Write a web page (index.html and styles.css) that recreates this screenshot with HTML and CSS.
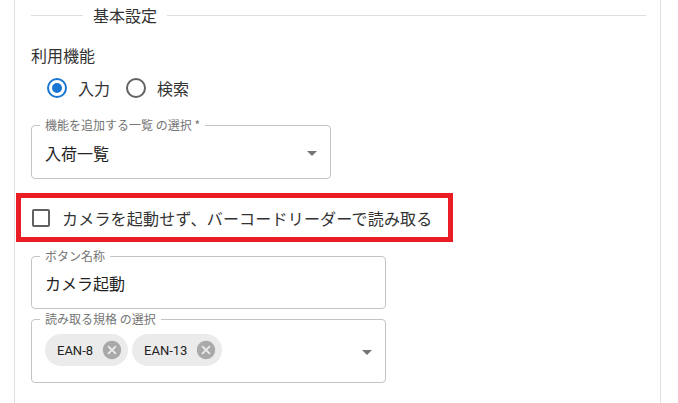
FILE: index.html
```html
<!DOCTYPE html>
<html>
<head>
  <title>基本設定</title>
  <link rel="stylesheet" href="styles.css">
</head>
<body>
  <div class="panel">
    <div class="section-title">
      <span class="rule rule-short"></span>
      <span class="section-text">基本設定</span>
      <span class="rule"></span>
    </div>

    <div class="group-label">利用機能</div>
    <div class="radio-row">
      <label class="radio-item"><span class="radio checked"></span>入力</label>
      <label class="radio-item"><span class="radio"></span>検索</label>
    </div>

    <fieldset class="field field-select">
      <legend>機能を追加する一覧 の選択 *</legend>
      <div class="field-value">入荷一覧</div>
      <span class="arrow"></span>
    </fieldset>

    <div class="highlight">
      <span class="checkbox"></span>
      <span class="check-text">カメラを起動せず、バーコードリーダーで読み取る</span>
    </div>

    <fieldset class="field field-text">
      <legend>ボタン名称</legend>
      <div class="field-value">カメラ起動</div>
    </fieldset>

    <fieldset class="field field-chips">
      <legend>読み取る規格 の選択</legend>
      <div class="chips">
        <span class="chip">EAN-8
          <svg viewBox="0 0 24 24"><path d="M12 2C6.470 2 2 6.470 2 12s4.470 10 10 10 10-4.470 10-10S17.530 2 12 2zm5 13.590L15.590 17 12 13.410 8.410 17 7 15.590 10.590 12 7 8.410 8.410 7 12 10.590 15.590 7 17 8.410 13.410 12 17 15.590z"/></svg>
        </span>
        <span class="chip">EAN-13
          <svg viewBox="0 0 24 24"><path d="M12 2C6.470 2 2 6.470 2 12s4.470 10 10 10 10-4.470 10-10S17.530 2 12 2zm5 13.590L15.590 17 12 13.410 8.410 17 7 15.590 10.590 12 7 8.410 8.410 7 12 10.590 15.590 7 17 8.410 13.410 12 17 15.590z"/></svg>
        </span>
      </div>
      <span class="arrow"></span>
    </fieldset>
  </div>
</body>
</html>
```

FILE: styles.css
```css
body {
  font-family: "Noto Sans CJK JP", "Noto Sans", sans-serif;
  background-color: #fff;
  color: #333;
  margin: 0;
  padding: 0;
}

.panel {
  margin-left: 14px;
  width: 647px;
  height: 403px;
  border-left: 1px solid #e0e0e0;
  border-right: 1px solid #e0e0e0;
  padding-left: 16px;
  box-sizing: border-box;
}

.section-title {
  display: flex;
  align-items: center;
  height: 30px;
  width: 615px;
}

.rule {
  flex: 1;
  height: 1px;
  background-color: #dedede;
}

.rule-short {
  flex: 0 0 52px;
}

.section-text {
  font-size: 16px;
  line-height: 24px;
  padding: 0 10px;
  color: #333;
}

.group-label {
  margin-top: 13px;
  font-size: 16px;
  line-height: 24px;
}

.radio-row {
  display: flex;
  margin-top: 9px;
  padding-left: 16px;
  height: 24px;
  align-items: center;
}

.radio-item {
  display: flex;
  align-items: center;
  font-size: 16px;
  margin-right: 16px;
}

.radio {
  width: 20px;
  height: 20px;
  border: 2px solid #616161;
  border-radius: 50%;
  box-sizing: border-box;
  margin-right: 11px;
  display: flex;
  align-items: center;
  justify-content: center;
}

.radio.checked {
  border-color: #1976d2;
}

.radio.checked::after {
  content: "";
  width: 10px;
  height: 10px;
  border-radius: 50%;
  background-color: #1976d2;
}

.field {
  position: relative;
  margin: 0;
  padding: 0 8px;
  border: 1px solid #c4c4c4;
  border-radius: 4px;
  box-sizing: border-box;
}

.field legend {
  font-size: 12px;
  line-height: 16px;
  padding: 0 5px;
  color: #757575;
}

.field-value {
  padding: 7px 5px 13px;
  font-size: 16px;
  line-height: 24px;
  color: #222;
}

.field-select {
  width: 300px;
  margin-top: 17px;
}

.field-select .field-value {
  padding-top: 8px;
}

.arrow {
  position: absolute;
  right: 13px;
  top: 18px;
  width: 0;
  height: 0;
  border-left: 5px solid transparent;
  border-right: 5px solid transparent;
  border-top: 5px solid #757575;
}

.highlight {
  display: flex;
  align-items: center;
  margin-top: 14px;
  margin-left: -15px;
  width: 437px;
  height: 49px;
  border: 5px solid #ea1d25;
  box-sizing: border-box;
  padding-left: 11px;
}

.checkbox {
  width: 18px;
  height: 18px;
  border: 2px solid #616161;
  border-radius: 2px;
  box-sizing: border-box;
  margin-right: 12px;
  margin-top: 1px;
}

.check-text {
  font-size: 16px;
  letter-spacing: 0.2px;
  color: #333;
}

.field-text {
  width: 355px;
  margin-top: 6px;
}

.field-chips {
  width: 355px;
  margin-top: 2px;
}

.chips {
  display: flex;
  gap: 4px;
  padding: 7px 5px 16px;
}

.chip {
  display: flex;
  align-items: center;
  height: 32px;
  padding-left: 12px;
  padding-right: 5px;
  border-radius: 16px;
  background-color: #ebebeb;
  font-family: Roboto, "Liberation Sans", sans-serif;
  font-size: 13px;
  color: #222;
}

.chip svg {
  width: 22px;
  height: 22px;
  margin-left: 8px;
  fill: #a9a9a9;
}

.field-chips .arrow {
  top: 23px;
}
```
